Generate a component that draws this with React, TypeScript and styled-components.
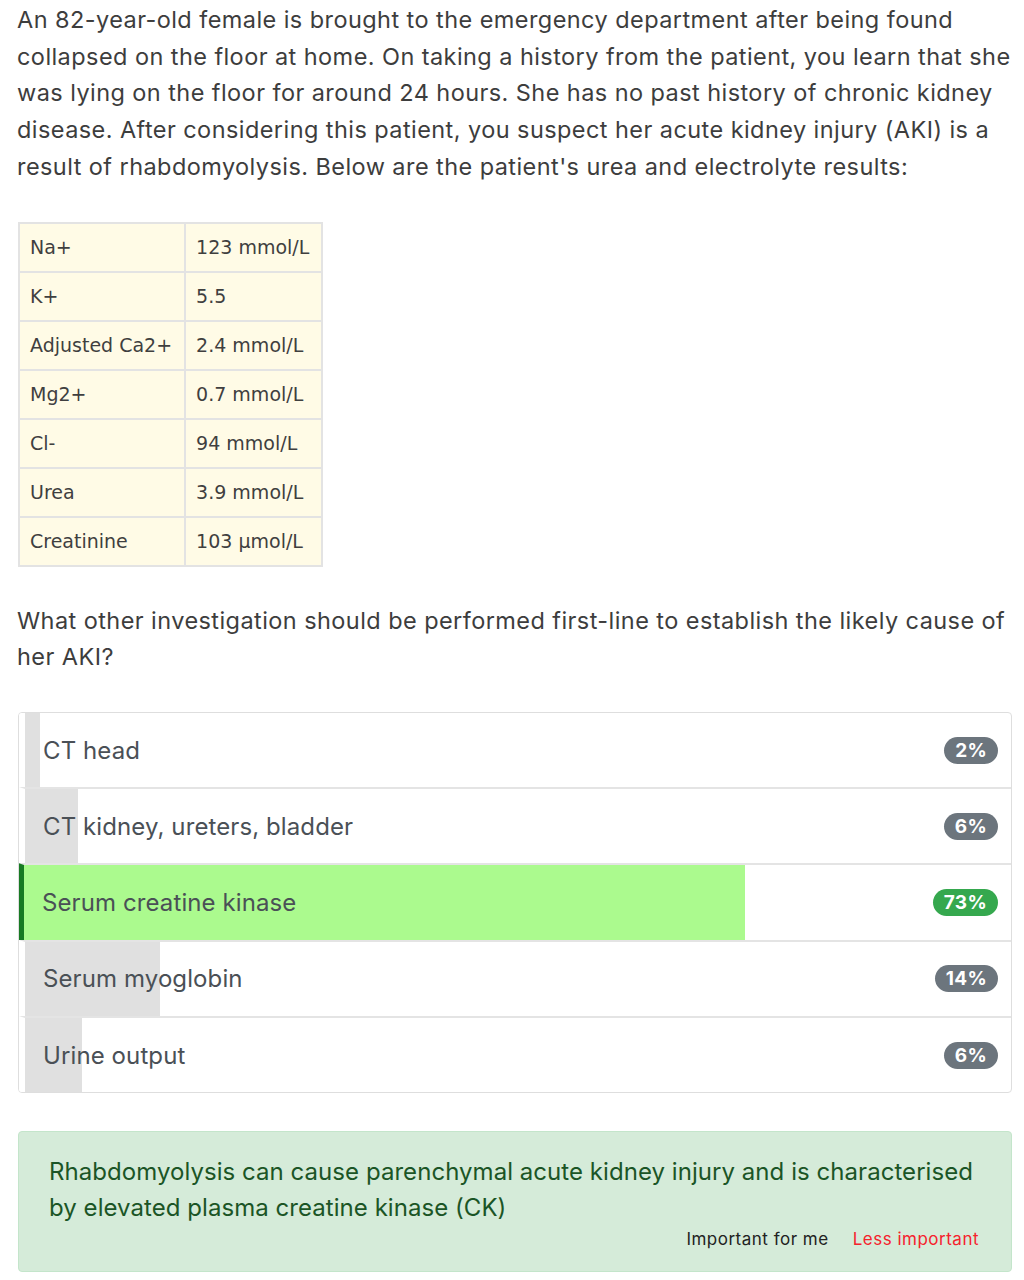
import * as React from "react";
import styled, { createGlobalStyle } from "styled-components";

// // // //

const GlobalStyle = createGlobalStyle`
    html, body {
        margin: 0;
        padding: 0;
        background: #ffffff;
    }
    body {
        font-family: Inter, "Noto Sans", "Liberation Sans", sans-serif;
        color: #3c3c3c;
    }
`;

const Page = styled.div`
    width: 1024px;
    box-sizing: border-box;
    padding: 2px 12px 0 17px;
`;

const Stem = styled.p`
    margin: 0 -8px 0 0;
    font-size: 23.5px;
    line-height: 36.7px;
    letter-spacing: 0.43px;
    color: #3d3d3d;
`;

const LabTable = styled.table`
    margin: 36px 0 0 1px;
    border-collapse: collapse;
    font-family: "DejaVu Sans", Verdana, sans-serif;
    font-size: 19px;
    color: #3f3f3f;
    background: #fffbe6;

    td {
        border: 2px solid #e3e3e3;
        height: 49px;
        padding: 0 12px 0 10px;
        box-sizing: border-box;
    }
`;

const Question = styled(Stem)`
    margin-top: 36px;
`;

const OptionList = styled.ul`
    list-style: none;
    margin: 36px 0 0 1px;
    padding: 0;
    border: 1px solid #dedede;
    border-radius: 4px;
    overflow: hidden;
`;

const OptionRow = styled.li<{ $correct?: boolean }>`
    position: relative;
    display: flex;
    align-items: center;
    height: 74.25px;
    padding-right: 13px;
    border-left: 6px solid ${(p) => (p.$correct ? "#177a23" : "#ffffff")};
    margin-left: ${(p) => (p.$correct ? "-1px" : "0")};
    & + & {
        border-top: 2px solid #e4e4e4;
    }
`;

const Bar = styled.div<{ $correct?: boolean }>`
    position: absolute;
    left: 0;
    top: 0;
    bottom: 0;
    background: ${(p) => (p.$correct ? "#abfa8e" : "#e0e0e0")};
`;

const OptionLabel = styled.span`
    position: relative;
    flex: 1;
    padding-left: 18px;
    font-size: 24px;
    letter-spacing: 0.1px;
    color: #4a5056;
`;

const Pill = styled.span<{ $correct?: boolean }>`
    position: relative;
    display: inline-flex;
    align-items: center;
    height: 27px;
    padding: 0 11px;
    border-radius: 14px;
    font-size: 19px;
    font-weight: 700;
    letter-spacing: 0.3px;
    color: #ffffff;
    background: ${(p) => (p.$correct ? "#35a84e" : "#6c757d")};
`;

const Feedback = styled.div`
    margin: 38px 0 0 1px;
    padding: 22px 28px 22px 30px;
    background: #d5ebd9;
    border: 1px solid #c4e5cb;
    border-radius: 4px;
    color: #1b5526;
`;

const FeedbackText = styled.p`
    margin: 0;
    font-size: 24px;
    line-height: 36px;
    letter-spacing: 0.05px;
`;

const Rating = styled.div`
    display: flex;
    justify-content: flex-end;
    gap: 24px;
    margin-top: 3px;
    padding-right: 4px;
    font-size: 17px;
    letter-spacing: 0.5px;
`;

const RateLink = styled.span<{ $less?: boolean }>`
    color: ${(p) => (p.$less ? "#f5222d" : "#222222")};
`;

const LABS: [string, string][] = [
    ["Na+", "123 mmol/L"],
    ["K+", "5.5"],
    ["Adjusted Ca2+", "2.4 mmol/L"],
    ["Mg2+", "0.7 mmol/L"],
    ["Cl-", "94 mmol/L"],
    ["Urea", "3.9 mmol/L"],
    ["Creatinine", "103 µmol/L"],
];

const OPTIONS = [
    { label: "CT head", pct: "2%", width: 1.5 },
    { label: "CT kidney, ureters, bladder", pct: "6%", width: 5.4 },
    { label: "Serum creatine kinase", pct: "73%", width: 73, correct: true },
    { label: "Serum myoglobin", pct: "14%", width: 13.7 },
    { label: "Urine output", pct: "6%", width: 5.8 },
];

export default function App() {
    return (
        <Page>
            <GlobalStyle />
            <Stem>
                An 82-year-old female is brought to the emergency department
                after being found collapsed on the floor at home. On taking a
                history from the patient, you learn that she was lying on the
                floor for around 24 hours. She has no past history of chronic
                kidney disease. After considering this patient, you suspect her
                acute kidney injury (AKI) is a result of rhabdomyolysis. Below
                are the patient's urea and electrolyte results:
            </Stem>

            <LabTable>
                <tbody>
                    {LABS.map(([name, value]) => (
                        <tr key={name}>
                            <td>{name}</td>
                            <td>{value}</td>
                        </tr>
                    ))}
                </tbody>
            </LabTable>

            <Question>
                What other investigation should be performed first-line to
                establish the likely cause of her AKI?
            </Question>

            <OptionList>
                {OPTIONS.map((o) => (
                    <OptionRow key={o.label} $correct={o.correct}>
                        <Bar
                            $correct={o.correct}
                            style={{ width: `${o.width}%` }}
                        />
                        <OptionLabel>{o.label}</OptionLabel>
                        <Pill $correct={o.correct}>{o.pct}</Pill>
                    </OptionRow>
                ))}
            </OptionList>

            <Feedback>
                <FeedbackText>
                    Rhabdomyolysis can cause parenchymal acute kidney injury and
                    is characterised by elevated plasma creatine kinase (CK)
                </FeedbackText>
                <Rating>
                    <RateLink>Important for me</RateLink>
                    <RateLink $less>Less important</RateLink>
                </Rating>
            </Feedback>
        </Page>
    );
}
